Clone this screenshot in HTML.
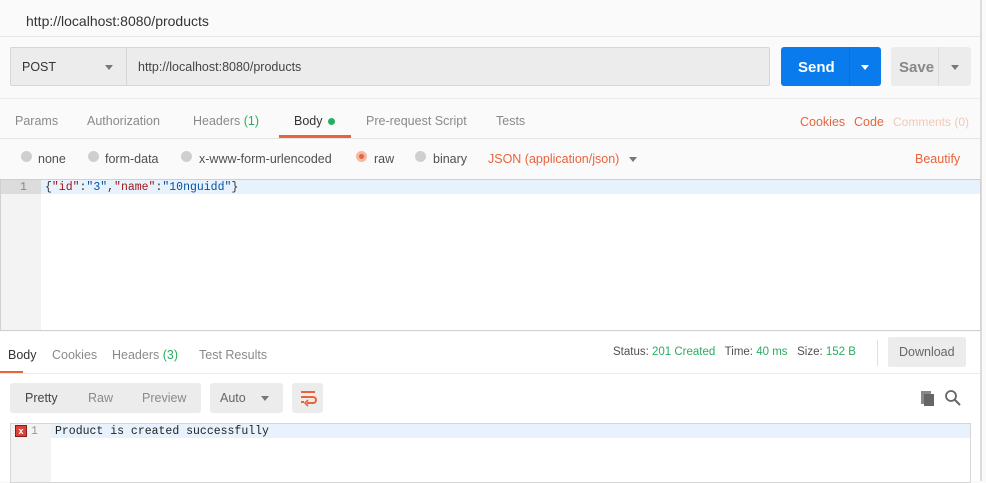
<!DOCTYPE html>
<html><head><style>
*{box-sizing:border-box;margin:0;padding:0}
body{width:986px;height:481px;overflow:hidden;background:#fafafa;font-family:"Liberation Sans",sans-serif;font-size:12.5px;color:#505050;position:relative}
.a{position:absolute;white-space:nowrap}
.g{color:#8a8a8a}
.o{color:#e8643c}
.gr{color:#27ae60}
.mono{font-family:"Liberation Mono",monospace;font-size:11.5px}
.rad{position:absolute;width:11px;height:11px;border-radius:50%;background:#cfcfcf}
.tri{position:absolute;width:0;height:0;border-left:4px solid transparent;border-right:4px solid transparent;border-top:5px solid #777}
</style></head><body>
<div class="a" style="left:26px;top:13px;font-size:14px;color:#333">http://localhost:8080/products</div>
<div class="a" style="left:0;top:36px;width:980px;height:1px;background:#e6e6e6"></div>
<div class="a" style="left:980px;top:0;width:2px;height:481px;background:#dcdcdc"></div>
<div class="a" style="left:10px;top:47px;width:760px;height:39px;background:#ececec;border:1px solid #d6d6d6;border-radius:2px"></div>
<div class="a" style="left:126px;top:47px;width:1px;height:39px;background:#d6d6d6"></div>
<div class="a" style="left:22px;top:60px;color:#333">POST</div>
<div class="tri" style="left:105px;top:65px"></div>
<div class="a" style="left:138px;top:60px;color:#444">http://localhost:8080/products</div>
<div class="a" style="left:781px;top:47px;width:100px;height:39px;background:#097bed;border-radius:3px"></div>
<div class="a" style="left:849px;top:47px;width:1px;height:39px;background:#0a6fd6"></div>
<div class="a" style="left:798px;top:59px;color:#fff;font-weight:bold;font-size:15px">Send</div>
<div class="tri" style="left:861px;top:65px;border-top-color:#fff"></div>
<div class="a" style="left:891px;top:47px;width:80px;height:39px;background:#ececec;border-radius:3px"></div>
<div class="a" style="left:938px;top:47px;width:1px;height:39px;background:#ddd"></div>
<div class="a" style="left:899px;top:59px;color:#888;font-weight:bold;font-size:15px">Save</div>
<div class="tri" style="left:951px;top:65px"></div>
<div class="a" style="left:0;top:98px;width:980px;height:1px;background:#ececec"></div>
<div class="a g" style="left:15px;top:114px">Params</div>
<div class="a g" style="left:87px;top:114px">Authorization</div>
<div class="a g" style="left:193px;top:114px">Headers <span class="gr">(1)</span></div>
<div class="a" style="left:294px;top:114px;color:#333">Body</div>
<div class="a" style="left:328px;top:118px;width:7px;height:7px;border-radius:50%;background:#27ae60"></div>
<div class="a g" style="left:366px;top:114px">Pre-request Script</div>
<div class="a g" style="left:496px;top:114px">Tests</div>
<div class="a o" style="left:800px;top:115px">Cookies</div>
<div class="a o" style="left:854px;top:115px">Code</div>
<div class="a" style="left:893px;top:115px;color:#f3c8b8;font-size:12px">Comments (0)</div>
<div class="a" style="left:279px;top:135px;width:72px;height:3px;background:#e8643c"></div>
<div class="a" style="left:0;top:138px;width:980px;height:1px;background:#e4e4e4"></div>
<div class="rad" style="left:21px;top:151px"></div><div class="a" style="left:38px;top:152px">none</div>
<div class="rad" style="left:88px;top:151px"></div><div class="a" style="left:105px;top:152px">form-data</div>
<div class="rad" style="left:181px;top:151px"></div><div class="a" style="left:199px;top:152px">x-www-form-urlencoded</div>
<div class="rad" style="left:356px;top:151px;background:#f2b9a5"></div><div class="a" style="left:359px;top:154px;width:5px;height:5px;border-radius:50%;background:#e8643c"></div><div class="a" style="left:374px;top:152px">raw</div>
<div class="rad" style="left:415px;top:151px"></div><div class="a" style="left:433px;top:152px">binary</div>
<div class="a o" style="left:488px;top:152px">JSON (application/json)</div>
<div class="tri" style="left:629px;top:157px"></div>
<div class="a o" style="left:915px;top:152px">Beautify</div>
<div class="a" style="left:0;top:179px;width:981px;height:152px;background:#fff;border:1px solid #d0d0d0"></div>
<div class="a" style="left:1px;top:180px;width:40px;height:150px;background:#f3f3f3"></div>
<div class="a" style="left:1px;top:180px;width:40px;height:14px;background:#dcdcdc"></div>
<div class="a" style="left:41px;top:180px;width:939px;height:14px;background:#e8f2fd"></div>
<div class="a mono" style="left:20px;top:181px;color:#888">1</div>
<div class="a mono" style="left:45px;top:181px;color:#333">{<span style="color:#a31515">"id"</span>:<span style="color:#0451a5">"3"</span>,<span style="color:#a31515">"name"</span>:<span style="color:#0451a5">"10nguidd"</span>}</div>
<div class="a" style="left:0;top:332px;width:980px;height:149px;background:#fff"></div>
<div class="a" style="left:8px;top:348px;color:#333">Body</div>
<div class="a g" style="left:52px;top:348px">Cookies</div>
<div class="a g" style="left:112px;top:348px">Headers <span class="gr">(3)</span></div>
<div class="a g" style="left:199px;top:348px">Test Results</div>
<div class="a" style="left:0;top:371px;width:23px;height:3px;background:#e8643c"></div>
<div class="a" style="left:0;top:373px;width:980px;height:1px;background:#ececec"></div>
<div class="a" style="left:613px;top:346px;font-size:11.5px">Status: <span class="gr">201 Created</span> &nbsp; Time: <span class="gr">40 ms</span> &nbsp; Size: <span class="gr">152 B</span></div>
<div class="a" style="left:877px;top:340px;width:1px;height:26px;background:#e0e0e0"></div>
<div class="a" style="left:888px;top:337px;width:78px;height:30px;background:#ececec;border-radius:2px"></div>
<div class="a" style="left:899px;top:345px;color:#666">Download</div>
<div class="a" style="left:10px;top:383px;width:191px;height:30px;background:#ececec;border-radius:3px"></div>
<div class="a" style="left:25px;top:391px;color:#444">Pretty</div>
<div class="a g" style="left:88px;top:391px">Raw</div>
<div class="a g" style="left:142px;top:391px">Preview</div>
<div class="a" style="left:210px;top:383px;width:73px;height:30px;background:#ececec;border-radius:3px"></div>
<div class="a" style="left:220px;top:391px;color:#666">Auto</div>
<div class="tri" style="left:261px;top:396px"></div>
<div class="a" style="left:292px;top:383px;width:31px;height:30px;background:#ececec;border-radius:3px"></div>
<svg class="a" style="left:298px;top:389px" width="20" height="18"><path d="M3 3h14M3 8h12a3 3 0 0 1 0 6h-6M3 13h3" stroke="#e8643c" stroke-width="2" fill="none"/><path d="M10 11l-3 3 3 3" stroke="#e8643c" stroke-width="1.6" fill="none"/></svg>
<div class="a" style="left:921px;top:391px;width:10px;height:13px;background:#888"></div>
<div class="a" style="left:924px;top:394px;width:10px;height:12px;background:#666"></div>
<svg class="a" style="left:944px;top:389px" width="18" height="18"><circle cx="7" cy="7" r="5" stroke="#666" stroke-width="1.8" fill="none"/><path d="M11 11l5 5" stroke="#666" stroke-width="2"/></svg>
<div class="a" style="left:10px;top:423px;width:961px;height:60px;border:1px solid #d6d6d6;background:#fff"></div>
<div class="a" style="left:11px;top:424px;width:40px;height:58px;background:#f3f3f3"></div>
<div class="a" style="left:51px;top:424px;width:919px;height:14px;background:#e8f2fd"></div>
<div class="a" style="left:15px;top:425px;width:12px;height:12px;background:#d9443a;border:1px solid #8a1e17;color:#fff;font-size:9px;line-height:10px;text-align:center;font-weight:bold">x</div>
<div class="a mono" style="left:31px;top:425px;color:#999">1</div>
<div class="a mono" style="left:55px;top:425px;color:#222">Product is created successfully</div>
</body></html>
